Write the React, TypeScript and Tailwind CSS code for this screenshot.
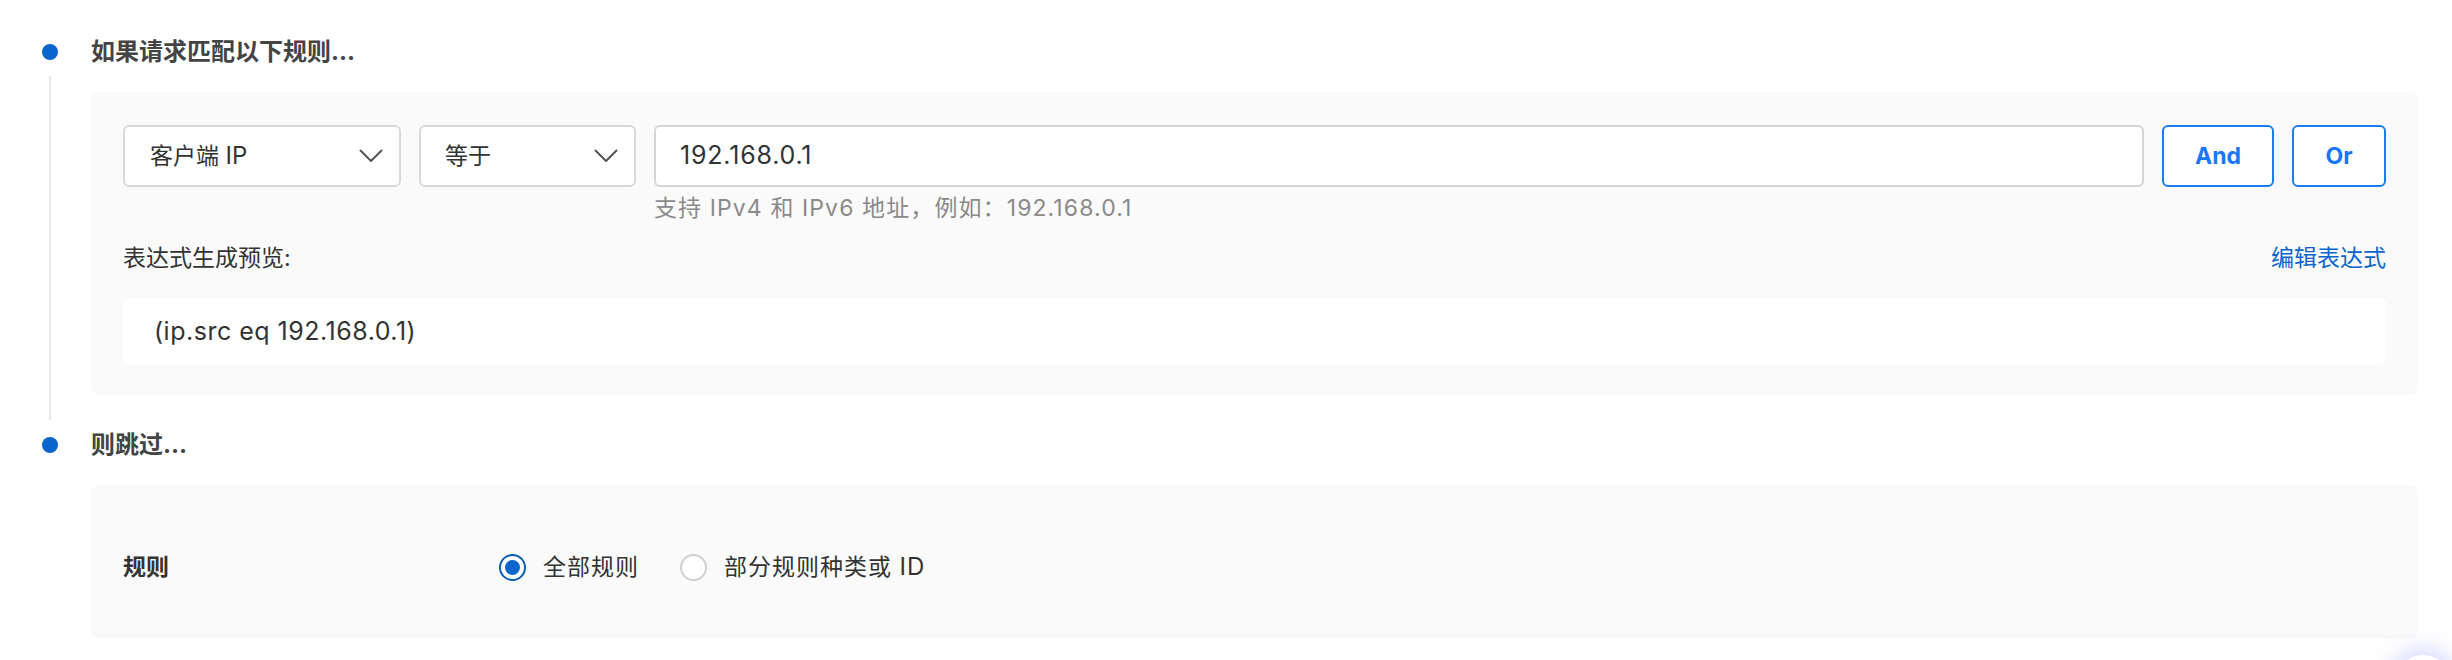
import React from "react";

function Chevron() {
  return (
    <svg width="24" height="14" viewBox="0 0 24 14" fill="none">
      <polyline points="1.5,1.5 12,12 22.5,1.5" stroke="#555" strokeWidth="2" strokeLinecap="round" strokeLinejoin="round" />
    </svg>
  );
}

export default function App() {
  return (
    <div className="relative w-[2452px] h-[660px] overflow-hidden bg-white font-['Inter','Noto_Sans_CJK_SC',sans-serif] text-[#333]">
      <div className="pl-[42px] pr-[34px] pt-[36px]">
        {/* Step 1 */}
        <div className="flex gap-[33px]">
          <div className="flex w-[16px] flex-col items-center">
            <div className="flex h-[32px] items-center">
              <div className="h-[16px] w-[16px] rounded-full bg-[#0a66cc]" />
            </div>
            <div className="mb-[9px] mt-[8px] w-[2px] flex-1 bg-[#e8e8e8]" />
          </div>
          <div className="flex-1 pb-[34px]">
            <div className="h-[32px] text-[24px] font-bold leading-[32px] text-[#444]">如果请求匹配以下规则...</div>
            <div className="mt-[24px] rounded-[8px] bg-[#fafafa] px-[32px] pb-[30px] pt-[33px]">
              <div className="flex h-[62px] gap-[18px]">
                <div className="flex w-[278px] items-center justify-between rounded-[6px] border-[2px] border-[#d9d9d9] bg-white pl-[25px] pr-[16px] text-[23px]">
                  <span>
                    客户端 <span className="text-[24px]">IP</span>
                  </span>
                  <Chevron />
                </div>
                <div className="flex w-[217px] items-center justify-between rounded-[6px] border-[2px] border-[#d9d9d9] bg-white pl-[24px] pr-[16px] text-[23px]">
                  <span>等于</span>
                  <Chevron />
                </div>
                <div className="flex flex-1 items-center rounded-[6px] border-[2px] border-[#d4d4d4] bg-white pl-[24px] text-[25px] tracking-[0.8px]">
                  192.168.0.1
                </div>
                <button className="w-[112px] rounded-[6px] border-[2px] border-[#1a7cf5] bg-white text-[23px] font-bold text-[#1677ff]">
                  And
                </button>
                <button className="w-[94px] rounded-[6px] border-[2px] border-[#1a7cf5] bg-white text-[23px] font-bold text-[#1677ff]">
                  Or
                </button>
              </div>
              <div className="ml-[531px] mt-[6px] h-[30px] text-[23px] leading-[30px] tracking-[1.1px] text-[#8a8a8a]">
                支持 IPv4 和 IPv6 地址，例如：192.168.0.1
              </div>
              <div className="mt-[20px] flex h-[30px] items-center justify-between text-[23px] leading-[30px]">
                <span>表达式生成预览:</span>
                <span className="text-[#0a66cc]">编辑表达式</span>
              </div>
              <div className="mt-[25px] flex h-[67px] items-center rounded-[6px] bg-white pl-[31px] text-[25px] tracking-[0.5px]">
                (ip.src eq 192.168.0.1)
              </div>
            </div>
          </div>
        </div>

        {/* Step 2 */}
        <div className="flex gap-[33px]">
          <div className="flex w-[16px] flex-col items-center">
            <div className="flex h-[32px] items-center">
              <div className="h-[16px] w-[16px] rounded-full bg-[#0a66cc]" />
            </div>
          </div>
          <div className="flex-1">
            <div className="h-[32px] text-[24px] font-bold leading-[32px] text-[#444]">则跳过...</div>
            <div className="mt-[24px] flex h-[154px] items-center rounded-[8px] bg-[#fafafa] px-[32px] pt-[10px]">
              <div className="w-[376px] text-[23px] font-bold">规则</div>
              <div className="flex items-center text-[23px]">
                <div className="flex h-[27px] w-[27px] items-center justify-center rounded-full border-[2px] border-[#0b5cb8] bg-white">
                  <div className="h-[15px] w-[15px] rounded-full bg-[#0a66cc]" />
                </div>
                <span className="ml-[17px] tracking-[1px]">全部规则</span>
                <div className="ml-[41px] h-[27px] w-[27px] rounded-full border-[2px] border-[#cfcfcf] bg-white" />
                <span className="ml-[17px] tracking-[1px]">
                  部分规则种类或 <span className="text-[24px]">ID</span>
                </span>
              </div>
            </div>
          </div>
        </div>
      </div>

      <div className="absolute left-[2395px] top-[655px] h-[56px] w-[56px] rounded-full bg-white shadow-[0_0_22px_6px_rgba(110,110,255,0.28)]" />
    </div>
  );
}
